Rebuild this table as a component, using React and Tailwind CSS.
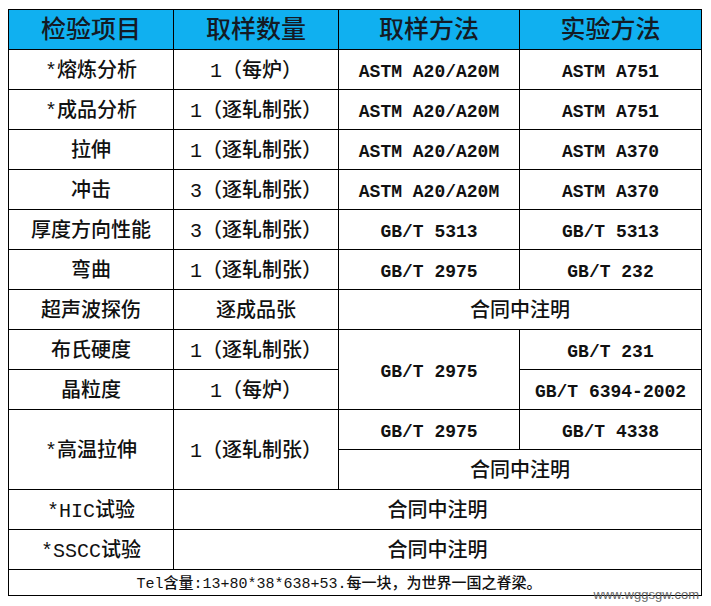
const rows = [
  ["*熔炼分析", "1（每炉）", "ASTM A20/A20M", "ASTM A751"],
  ["*成品分析", "1（逐轧制张）", "ASTM A20/A20M", "ASTM A751"],
  ["拉伸", "1（逐轧制张）", "ASTM A20/A20M", "ASTM A370"],
  ["冲击", "3（逐轧制张）", "ASTM A20/A20M", "ASTM A370"],
  ["厚度方向性能", "3（逐轧制张）", "GB/T 5313", "GB/T 5313"],
  ["弯曲", "1（逐轧制张）", "GB/T 2975", "GB/T 232"],
];

const font = { fontFamily: '"Liberation Mono", "Noto Sans CJK SC", monospace' };

function Cell({ children, latin, ...rest }) {
  return (
    <td
      {...rest}
      className={
        "border border-black text-center align-middle p-0 pt-[4px] h-[40px] leading-[28px] text-[#111] whitespace-nowrap " +
        (latin ? "text-[18px] font-bold" : "text-[20px] font-medium")
      }
    >
      {children}
    </td>
  );
}

export default function App() {
  return (
    <div className="bg-white w-[711px] h-[606px] pt-[9px] pl-[8px] relative" style={font}>
      <table className="border-collapse table-fixed w-[693px]">
        <colgroup>
          <col className="w-[165px]" />
          <col className="w-[165px]" />
          <col className="w-[181px]" />
          <col className="w-[182px]" />
        </colgroup>
        <thead>
          <tr>
            {["检验项目", "取样数量", "取样方法", "实验方法"].map((h) => (
              <th
                key={h}
                className="border border-black bg-[#10b0f0] h-[40px] p-0 pt-[4px] text-[25px] leading-[30px] font-medium text-[#141a24] text-center align-middle"
              >
                {h}
              </th>
            ))}
          </tr>
        </thead>
        <tbody>
          {rows.map((r) => (
            <tr key={r[0]}>
              <Cell>{r[0]}</Cell>
              <Cell>{r[1]}</Cell>
              <Cell latin>{r[2]}</Cell>
              <Cell latin>{r[3]}</Cell>
            </tr>
          ))}
          <tr>
            <Cell>超声波探伤</Cell>
            <Cell>逐成品张</Cell>
            <Cell colSpan={2}>合同中注明</Cell>
          </tr>
          <tr>
            <Cell>布氏硬度</Cell>
            <Cell>1（逐轧制张）</Cell>
            <Cell latin rowSpan={2}>GB/T 2975</Cell>
            <Cell latin>GB/T 231</Cell>
          </tr>
          <tr>
            <Cell>晶粒度</Cell>
            <Cell>1（每炉）</Cell>
            <Cell latin>GB/T 6394-2002</Cell>
          </tr>
          <tr>
            <Cell rowSpan={2}>*高温拉伸</Cell>
            <Cell rowSpan={2}>1（逐轧制张）</Cell>
            <Cell latin>GB/T 2975</Cell>
            <Cell latin>GB/T 4338</Cell>
          </tr>
          <tr>
            <Cell colSpan={2}>合同中注明</Cell>
          </tr>
          <tr>
            <Cell>*HIC试验</Cell>
            <Cell colSpan={3}>合同中注明</Cell>
          </tr>
          <tr>
            <Cell>*SSCC试验</Cell>
            <Cell colSpan={3}>合同中注明</Cell>
          </tr>
          <tr>
            <td
              colSpan={4}
              className="border border-black h-[26px] p-0 pr-[32px] text-center align-bottom text-[15px] leading-[20px] font-medium text-[#111] whitespace-nowrap"
            >
              Tel含量:13+80*38*638+53.每一块，为世界一国之脊梁。
            </td>
          </tr>
        </tbody>
      </table>
      <span
        className="absolute right-[12px] top-[588px] text-[13px] text-[#666] leading-none"
        style={{ fontFamily: '"Liberation Sans", Arial, sans-serif' }}
      >
        www.wggsgw.com
      </span>
    </div>
  );
}
